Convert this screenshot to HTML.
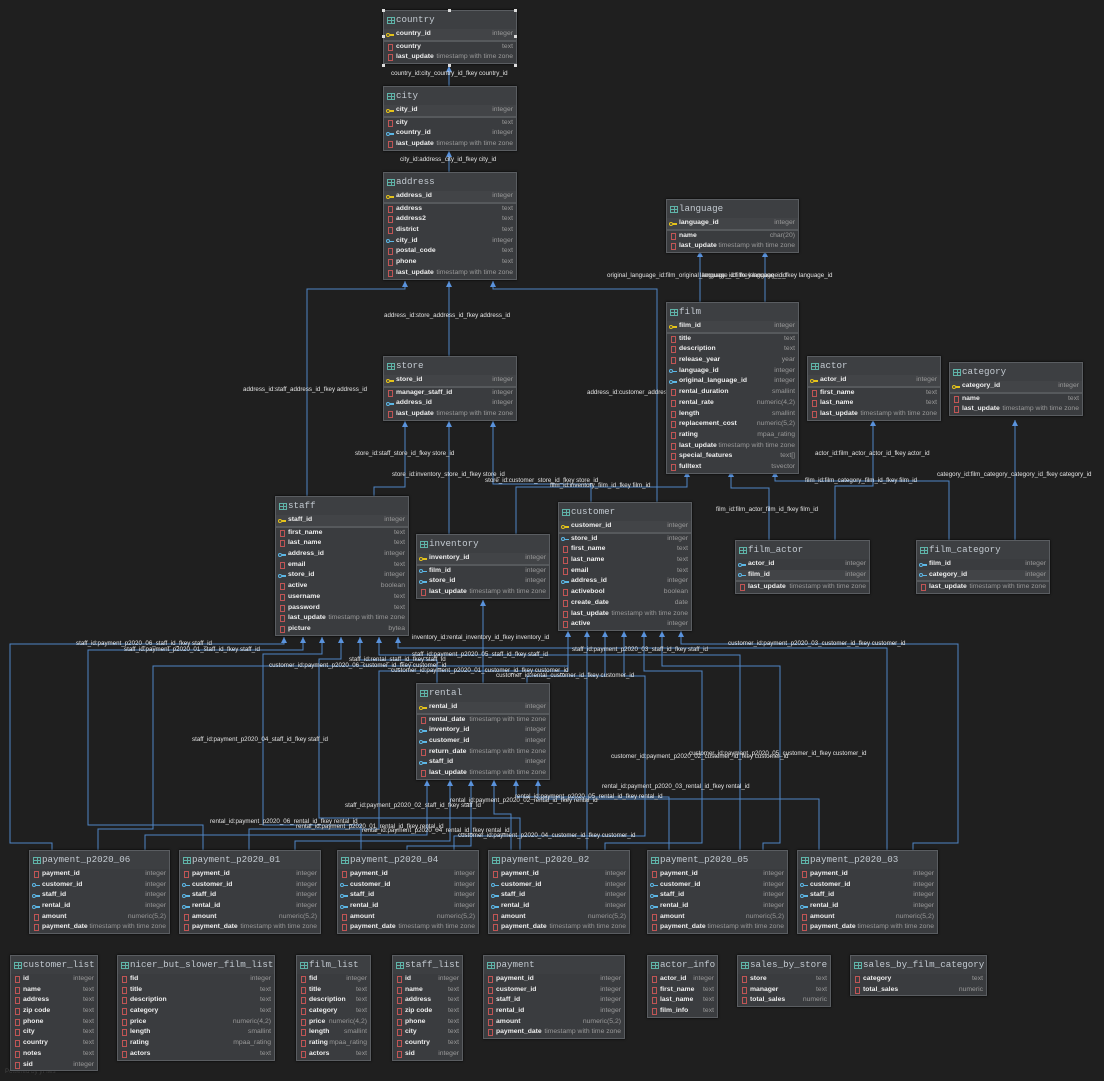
<!DOCTYPE html>
<html><head><meta charset="utf-8"><style>
body{margin:0;width:1104px;height:1081px;background:#1f1f1f;overflow:hidden;position:relative;font-family:"Liberation Sans",sans-serif}
.t{position:absolute;background:#3a3c3f;border:1px solid #5a5d61;box-shadow:0 0 2px #000;z-index:2}
.h{height:18px;line-height:18px;font-family:"Liberation Mono",monospace;font-size:9.2px;color:#c3cad1;padding-left:12px;position:relative;background:#3d3f42;white-space:nowrap;overflow:hidden}
.h:before{content:"";position:absolute;left:3px;top:6px;width:6px;height:5px;border:1px solid #5fb3a8;background:linear-gradient(#5fb3a8,#5fb3a8) 0 2px/100% 1px no-repeat,linear-gradient(#5fb3a8,#5fb3a8) 2.5px 0/1px 100% no-repeat}
.r{height:10.7px;line-height:10.7px;padding:0 3px 0 12px;position:relative;font-weight:bold;font-size:6.8px;color:#eee;white-space:nowrap;overflow:hidden}
.r b{float:right;font-weight:normal;color:#999}
.pk{background:#424447;border-bottom:2px solid #56595c}
.r i{position:absolute;left:4px;top:2px;width:3px;height:5px;border:1px solid #c05555}
.k i{border:1.5px solid #e5c31a;border-radius:50%;width:2px;height:2px;top:3.5px;left:2px}
.k i:after,.f i:after{content:"";position:absolute;left:3px;top:0.5px;width:4px;height:1.5px;background:#e5c31a}
.f i{border:1.5px solid #5cb7e6;border-radius:50%;width:2px;height:2px;top:3.5px;left:2px}
.f i:after{background:#5cb7e6}
.l{position:absolute;font-size:6.2px;color:#e4e4e4;white-space:nowrap;z-index:1;line-height:7px}
.s{position:absolute;width:3px;height:3px;background:#ddd;z-index:3}
</style></head><body>
<svg width="1104" height="1081" style="position:absolute;left:0;top:0;z-index:0">
<defs><marker id="a" viewBox="0 0 10 10" refX="10" refY="5" markerWidth="6" markerHeight="6" orient="auto-start-reverse"><path d="M0,0L10,5L0,10z" fill="#5a93dd"/></marker></defs>
<g fill="none" stroke="#4f86c6" stroke-width="1" marker-start="url(#a)">
<path d="M449,66V86"/><path d="M449,151V172"/><path d="M449,281V356"/>
<path d="M405,281V289H307V496"/><path d="M493,281V289H657V502"/>
<path d="M700,251V302"/><path d="M765,251V302"/>
<path d="M405,421V487H374V496"/><path d="M449,421V534"/><path d="M493,421V484H591V502"/>
<path d="M687,471V487H516V534"/><path d="M731,471V488H769V540"/><path d="M775,471V481H949V540"/>
<path d="M873,420V486H835V540"/><path d="M1015,420V540"/><path d="M483,600V683"/>
<path d="M284,637V644H10V843H52V850"/><path d="M303,637V650H88V825H203V850"/>
<path d="M322,637V654H263V825H361V850"/><path d="M341,637V659H319V818H520V850"/>
<path d="M360,637V660H437V683"/><path d="M379,637V655H740V850"/><path d="M398,637V648H887V850"/>
<path d="M568,631V666H153V829H98V850"/><path d="M568,631V671H379V829H249V850"/>
<path d="M587,631V850"/><path d="M605,631V676H527V683"/><path d="M624,631V676H645V836H454V850"/>
<path d="M644,631V671H702V843H605V850"/><path d="M662,631V666H780V843H763V850"/><path d="M681,631V644H958V843H913V850"/>
<path d="M427,780V835H145V850"/><path d="M450,780V841H295V850"/><path d="M471,780V846H407V850"/>
<path d="M494,780V814H511V850"/><path d="M516,780V797H669V850"/><path d="M538,780V799H819V850"/>
</g></svg>

<div class="s" style="left:382px;top:9px"></div><div class="s" style="left:448px;top:9px"></div><div class="s" style="left:514px;top:9px"></div>
<div class="s" style="left:382px;top:35px"></div><div class="s" style="left:514px;top:35px"></div>
<div class="s" style="left:382px;top:64px"></div><div class="s" style="left:448px;top:64px"></div><div class="s" style="left:514px;top:64px"></div>

<div class="l" style="left:391px;top:70px">country_id:city_country_id_fkey country_id</div>
<div class="l" style="left:400px;top:156px">city_id:address_city_id_fkey city_id</div>
<div class="l" style="left:384px;top:312px">address_id:store_address_id_fkey address_id</div>
<div class="l" style="left:243px;top:386px">address_id:staff_address_id_fkey address_id</div>
<div class="l" style="left:587px;top:389px">address_id:customer_address_id_fkey address_id</div>
<div class="l" style="left:607px;top:272px">original_language_id:film_original_language_id_fkey language_id</div>
<div class="l" style="left:700px;top:272px">language_id:film_language_id_fkey language_id</div>
<div class="l" style="left:355px;top:450px">store_id:staff_store_id_fkey store_id</div>
<div class="l" style="left:392px;top:471px">store_id:inventory_store_id_fkey store_id</div>
<div class="l" style="left:485px;top:477px">store_id:customer_store_id_fkey store_id</div>
<div class="l" style="left:550px;top:482px">film_id:inventory_film_id_fkey film_id</div>
<div class="l" style="left:805px;top:477px">film_id:film_category_film_id_fkey film_id</div>
<div class="l" style="left:815px;top:450px">actor_id:film_actor_actor_id_fkey actor_id</div>
<div class="l" style="left:937px;top:471px">category_id:film_category_category_id_fkey category_id</div>
<div class="l" style="left:716px;top:506px">film_id:film_actor_film_id_fkey film_id</div>
<div class="l" style="left:412px;top:634px">inventory_id:rental_inventory_id_fkey inventory_id</div>
<div class="l" style="left:76px;top:640px">staff_id:payment_p2020_06_staff_id_fkey staff_id</div>
<div class="l" style="left:124px;top:646px">staff_id:payment_p2020_01_staff_id_fkey staff_id</div>
<div class="l" style="left:412px;top:651px">staff_id:payment_p2020_05_staff_id_fkey staff_id</div>
<div class="l" style="left:572px;top:646px">staff_id:payment_p2020_03_staff_id_fkey staff_id</div>
<div class="l" style="left:728px;top:640px">customer_id:payment_p2020_03_customer_id_fkey customer_id</div>
<div class="l" style="left:349px;top:656px">staff_id:rental_staff_id_fkey staff_id</div>
<div class="l" style="left:269px;top:662px">customer_id:payment_p2020_06_customer_id_fkey customer_id</div>
<div class="l" style="left:391px;top:667px">customer_id:payment_p2020_01_customer_id_fkey customer_id</div>
<div class="l" style="left:496px;top:672px">customer_id:rental_customer_id_fkey customer_id</div>
<div class="l" style="left:192px;top:736px">staff_id:payment_p2020_04_staff_id_fkey staff_id</div>
<div class="l" style="left:611px;top:753px">customer_id:payment_p2020_02_customer_id_fkey customer_id</div>
<div class="l" style="left:689px;top:750px">customer_id:payment_p2020_05_customer_id_fkey customer_id</div>
<div class="l" style="left:602px;top:783px">rental_id:payment_p2020_03_rental_id_fkey rental_id</div>
<div class="l" style="left:515px;top:793px">rental_id:payment_p2020_05_rental_id_fkey rental_id</div>
<div class="l" style="left:450px;top:797px">rental_id:payment_p2020_02_rental_id_fkey rental_id</div>
<div class="l" style="left:345px;top:802px">staff_id:payment_p2020_02_staff_id_fkey staff_id</div>
<div class="l" style="left:210px;top:818px">rental_id:payment_p2020_06_rental_id_fkey rental_id</div>
<div class="l" style="left:296px;top:823px">rental_id:payment_p2020_01_rental_id_fkey rental_id</div>
<div class="l" style="left:362px;top:827px">rental_id:payment_p2020_04_rental_id_fkey rental_id</div>
<div class="l" style="left:458px;top:832px">customer_id:payment_p2020_04_customer_id_fkey customer_id</div>

<div class="t" style="left:383px;top:10px;width:132px"><div class="h">country</div>
<div class="r k pk"><i></i>country_id<b>integer</b></div>
<div class="r"><i></i>country<b>text</b></div>
<div class="r"><i></i>last_update<b>timestamp with time zone</b></div></div>

<div class="t" style="left:383px;top:86px;width:132px"><div class="h">city</div>
<div class="r k pk"><i></i>city_id<b>integer</b></div>
<div class="r"><i></i>city<b>text</b></div>
<div class="r f"><i></i>country_id<b>integer</b></div>
<div class="r"><i></i>last_update<b>timestamp with time zone</b></div></div>

<div class="t" style="left:383px;top:172px;width:132px"><div class="h">address</div>
<div class="r k pk"><i></i>address_id<b>integer</b></div>
<div class="r"><i></i>address<b>text</b></div>
<div class="r"><i></i>address2<b>text</b></div>
<div class="r"><i></i>district<b>text</b></div>
<div class="r f"><i></i>city_id<b>integer</b></div>
<div class="r"><i></i>postal_code<b>text</b></div>
<div class="r"><i></i>phone<b>text</b></div>
<div class="r"><i></i>last_update<b>timestamp with time zone</b></div></div>

<div class="t" style="left:666px;top:199px;width:131px"><div class="h">language</div>
<div class="r k pk"><i></i>language_id<b>integer</b></div>
<div class="r"><i></i>name<b>char(20)</b></div>
<div class="r"><i></i>last_update<b>timestamp with time zone</b></div></div>

<div class="t" style="left:666px;top:302px;width:131px"><div class="h">film</div>
<div class="r k pk"><i></i>film_id<b>integer</b></div>
<div class="r"><i></i>title<b>text</b></div>
<div class="r"><i></i>description<b>text</b></div>
<div class="r"><i></i>release_year<b>year</b></div>
<div class="r f"><i></i>language_id<b>integer</b></div>
<div class="r f"><i></i>original_language_id<b>integer</b></div>
<div class="r"><i></i>rental_duration<b>smallint</b></div>
<div class="r"><i></i>rental_rate<b>numeric(4,2)</b></div>
<div class="r"><i></i>length<b>smallint</b></div>
<div class="r"><i></i>replacement_cost<b>numeric(5,2)</b></div>
<div class="r"><i></i>rating<b>mpaa_rating</b></div>
<div class="r"><i></i>last_update<b>timestamp with time zone</b></div>
<div class="r"><i></i>special_features<b>text[]</b></div>
<div class="r"><i></i>fulltext<b>tsvector</b></div></div>

<div class="t" style="left:807px;top:356px;width:132px"><div class="h">actor</div>
<div class="r k pk"><i></i>actor_id<b>integer</b></div>
<div class="r"><i></i>first_name<b>text</b></div>
<div class="r"><i></i>last_name<b>text</b></div>
<div class="r"><i></i>last_update<b>timestamp with time zone</b></div></div>

<div class="t" style="left:949px;top:362px;width:132px"><div class="h">category</div>
<div class="r k pk"><i></i>category_id<b>integer</b></div>
<div class="r"><i></i>name<b>text</b></div>
<div class="r"><i></i>last_update<b>timestamp with time zone</b></div></div>

<div class="t" style="left:383px;top:356px;width:132px"><div class="h">store</div>
<div class="r k pk"><i></i>store_id<b>integer</b></div>
<div class="r"><i></i>manager_staff_id<b>integer</b></div>
<div class="r f"><i></i>address_id<b>integer</b></div>
<div class="r"><i></i>last_update<b>timestamp with time zone</b></div></div>

<div class="t" style="left:275px;top:496px;width:132px"><div class="h">staff</div>
<div class="r k pk"><i></i>staff_id<b>integer</b></div>
<div class="r"><i></i>first_name<b>text</b></div>
<div class="r"><i></i>last_name<b>text</b></div>
<div class="r f"><i></i>address_id<b>integer</b></div>
<div class="r"><i></i>email<b>text</b></div>
<div class="r f"><i></i>store_id<b>integer</b></div>
<div class="r"><i></i>active<b>boolean</b></div>
<div class="r"><i></i>username<b>text</b></div>
<div class="r"><i></i>password<b>text</b></div>
<div class="r"><i></i>last_update<b>timestamp with time zone</b></div>
<div class="r"><i></i>picture<b>bytea</b></div></div>

<div class="t" style="left:416px;top:534px;width:132px"><div class="h">inventory</div>
<div class="r k pk"><i></i>inventory_id<b>integer</b></div>
<div class="r f"><i></i>film_id<b>integer</b></div>
<div class="r f"><i></i>store_id<b>integer</b></div>
<div class="r"><i></i>last_update<b>timestamp with time zone</b></div></div>

<div class="t" style="left:558px;top:502px;width:132px"><div class="h">customer</div>
<div class="r k pk"><i></i>customer_id<b>integer</b></div>
<div class="r f"><i></i>store_id<b>integer</b></div>
<div class="r"><i></i>first_name<b>text</b></div>
<div class="r"><i></i>last_name<b>text</b></div>
<div class="r"><i></i>email<b>text</b></div>
<div class="r f"><i></i>address_id<b>integer</b></div>
<div class="r"><i></i>activebool<b>boolean</b></div>
<div class="r"><i></i>create_date<b>date</b></div>
<div class="r"><i></i>last_update<b>timestamp with time zone</b></div>
<div class="r"><i></i>active<b>integer</b></div></div>

<div class="t" style="left:735px;top:540px;width:133px"><div class="h">film_actor</div>
<div class="r f"><i></i>actor_id<b>integer</b></div>
<div class="r f pk"><i></i>film_id<b>integer</b></div>
<div class="r"><i></i>last_update<b>timestamp with time zone</b></div></div>

<div class="t" style="left:916px;top:540px;width:132px"><div class="h">film_category</div>
<div class="r f"><i></i>film_id<b>integer</b></div>
<div class="r f pk"><i></i>category_id<b>integer</b></div>
<div class="r"><i></i>last_update<b>timestamp with time zone</b></div></div>

<div class="t" style="left:416px;top:683px;width:132px"><div class="h">rental</div>
<div class="r k pk"><i></i>rental_id<b>integer</b></div>
<div class="r"><i></i>rental_date<b>timestamp with time zone</b></div>
<div class="r f"><i></i>inventory_id<b>integer</b></div>
<div class="r f"><i></i>customer_id<b>integer</b></div>
<div class="r"><i></i>return_date<b>timestamp with time zone</b></div>
<div class="r f"><i></i>staff_id<b>integer</b></div>
<div class="r"><i></i>last_update<b>timestamp with time zone</b></div></div>

<div class="t" style="left:29px;top:850px;width:139px"><div class="h">payment_p2020_06</div>
<div class="r"><i></i>payment_id<b>integer</b></div><div class="r f"><i></i>customer_id<b>integer</b></div><div class="r f"><i></i>staff_id<b>integer</b></div><div class="r f"><i></i>rental_id<b>integer</b></div><div class="r"><i></i>amount<b>numeric(5,2)</b></div><div class="r"><i></i>payment_date<b>timestamp with time zone</b></div></div>
<div class="t" style="left:179px;top:850px;width:140px"><div class="h">payment_p2020_01</div>
<div class="r"><i></i>payment_id<b>integer</b></div><div class="r f"><i></i>customer_id<b>integer</b></div><div class="r f"><i></i>staff_id<b>integer</b></div><div class="r f"><i></i>rental_id<b>integer</b></div><div class="r"><i></i>amount<b>numeric(5,2)</b></div><div class="r"><i></i>payment_date<b>timestamp with time zone</b></div></div>
<div class="t" style="left:337px;top:850px;width:140px"><div class="h">payment_p2020_04</div>
<div class="r"><i></i>payment_id<b>integer</b></div><div class="r f"><i></i>customer_id<b>integer</b></div><div class="r f"><i></i>staff_id<b>integer</b></div><div class="r f"><i></i>rental_id<b>integer</b></div><div class="r"><i></i>amount<b>numeric(5,2)</b></div><div class="r"><i></i>payment_date<b>timestamp with time zone</b></div></div>
<div class="t" style="left:488px;top:850px;width:140px"><div class="h">payment_p2020_02</div>
<div class="r"><i></i>payment_id<b>integer</b></div><div class="r f"><i></i>customer_id<b>integer</b></div><div class="r f"><i></i>staff_id<b>integer</b></div><div class="r f"><i></i>rental_id<b>integer</b></div><div class="r"><i></i>amount<b>numeric(5,2)</b></div><div class="r"><i></i>payment_date<b>timestamp with time zone</b></div></div>
<div class="t" style="left:647px;top:850px;width:139px"><div class="h">payment_p2020_05</div>
<div class="r"><i></i>payment_id<b>integer</b></div><div class="r f"><i></i>customer_id<b>integer</b></div><div class="r f"><i></i>staff_id<b>integer</b></div><div class="r f"><i></i>rental_id<b>integer</b></div><div class="r"><i></i>amount<b>numeric(5,2)</b></div><div class="r"><i></i>payment_date<b>timestamp with time zone</b></div></div>
<div class="t" style="left:797px;top:850px;width:139px"><div class="h">payment_p2020_03</div>
<div class="r"><i></i>payment_id<b>integer</b></div><div class="r f"><i></i>customer_id<b>integer</b></div><div class="r f"><i></i>staff_id<b>integer</b></div><div class="r f"><i></i>rental_id<b>integer</b></div><div class="r"><i></i>amount<b>numeric(5,2)</b></div><div class="r"><i></i>payment_date<b>timestamp with time zone</b></div></div>

<div class="t" style="left:10px;top:955px;width:86px"><div class="h">customer_list</div>
<div class="r"><i></i>id<b>integer</b></div><div class="r"><i></i>name<b>text</b></div><div class="r"><i></i>address<b>text</b></div><div class="r"><i></i>zip code<b>text</b></div><div class="r"><i></i>phone<b>text</b></div><div class="r"><i></i>city<b>text</b></div><div class="r"><i></i>country<b>text</b></div><div class="r"><i></i>notes<b>text</b></div><div class="r"><i></i>sid<b>integer</b></div></div>
<div class="t" style="left:117px;top:955px;width:156px"><div class="h">nicer_but_slower_film_list</div>
<div class="r"><i></i>fid<b>integer</b></div><div class="r"><i></i>title<b>text</b></div><div class="r"><i></i>description<b>text</b></div><div class="r"><i></i>category<b>text</b></div><div class="r"><i></i>price<b>numeric(4,2)</b></div><div class="r"><i></i>length<b>smallint</b></div><div class="r"><i></i>rating<b>mpaa_rating</b></div><div class="r"><i></i>actors<b>text</b></div></div>
<div class="t" style="left:296px;top:955px;width:73px"><div class="h">film_list</div>
<div class="r"><i></i>fid<b>integer</b></div><div class="r"><i></i>title<b>text</b></div><div class="r"><i></i>description<b>text</b></div><div class="r"><i></i>category<b>text</b></div><div class="r"><i></i>price<b>numeric(4,2)</b></div><div class="r"><i></i>length<b>smallint</b></div><div class="r"><i></i>rating<b>mpaa_rating</b></div><div class="r"><i></i>actors<b>text</b></div></div>
<div class="t" style="left:392px;top:955px;width:69px"><div class="h">staff_list</div>
<div class="r"><i></i>id<b>integer</b></div><div class="r"><i></i>name<b>text</b></div><div class="r"><i></i>address<b>text</b></div><div class="r"><i></i>zip code<b>text</b></div><div class="r"><i></i>phone<b>text</b></div><div class="r"><i></i>city<b>text</b></div><div class="r"><i></i>country<b>text</b></div><div class="r"><i></i>sid<b>integer</b></div></div>
<div class="t" style="left:483px;top:955px;width:140px"><div class="h">payment</div>
<div class="r"><i></i>payment_id<b>integer</b></div><div class="r"><i></i>customer_id<b>integer</b></div><div class="r"><i></i>staff_id<b>integer</b></div><div class="r"><i></i>rental_id<b>integer</b></div><div class="r"><i></i>amount<b>numeric(5,2)</b></div><div class="r"><i></i>payment_date<b>timestamp with time zone</b></div></div>
<div class="t" style="left:647px;top:955px;width:69px"><div class="h">actor_info</div>
<div class="r"><i></i>actor_id<b>integer</b></div><div class="r"><i></i>first_name<b>text</b></div><div class="r"><i></i>last_name<b>text</b></div><div class="r"><i></i>film_info<b>text</b></div></div>
<div class="t" style="left:737px;top:955px;width:92px"><div class="h">sales_by_store</div>
<div class="r"><i></i>store<b>text</b></div><div class="r"><i></i>manager<b>text</b></div><div class="r"><i></i>total_sales<b>numeric</b></div></div>
<div class="t" style="left:850px;top:955px;width:135px"><div class="h">sales_by_film_category</div>
<div class="r"><i></i>category<b>text</b></div><div class="r"><i></i>total_sales<b>numeric</b></div></div>

<div class="l" style="left:5px;top:1068px;color:#444">Powered by yFiles</div>
</body></html>
